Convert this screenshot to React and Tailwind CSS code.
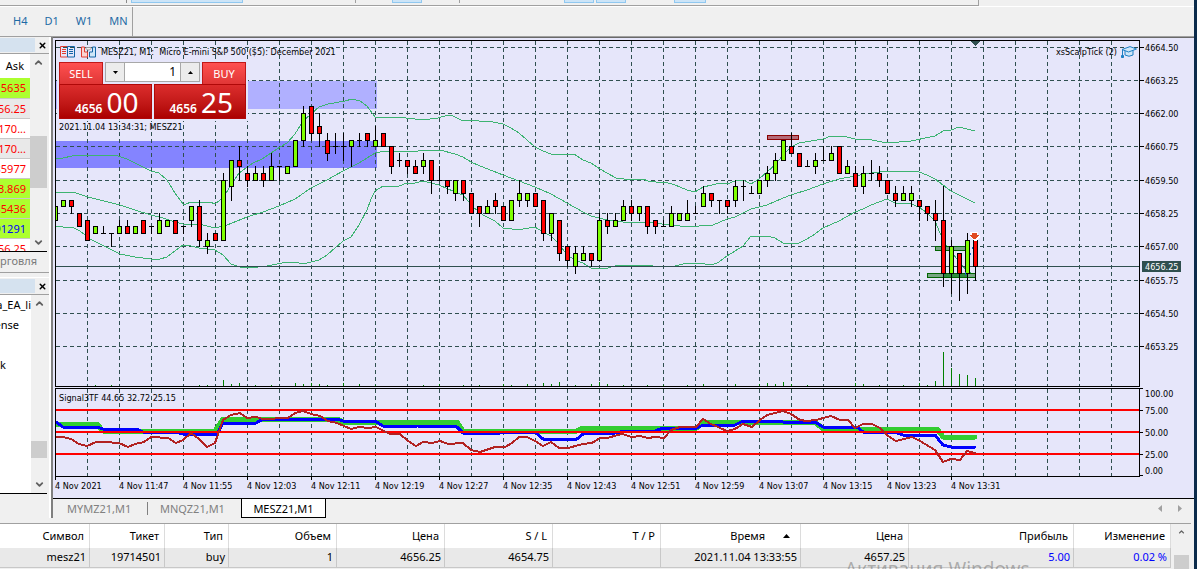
import { ChevronUp, ChevronDown, X } from 'lucide-react'

// [wick top, body top, body bottom, wick bottom, colour] in 0.25 ticks below 4664.50
// g = bullish, r = bearish, d = doji
const CANDLES = [
  [24, 24, 26, 26, 'g'], [23, 23, 24, 24, 'g'], [23, 23, 24, 25, 'r'], [25, 25, 27, 27, 'r'],
  [26, 26, 29, 29, 'r'], [27, 27, 28, 28, 'g'], [27, 28, 28, 28, 'd'], [28, 28, 28, 30, 'd'],
  [26, 27, 28, 28, 'g'], [26, 27, 28, 28, 'r'], [27, 27, 28, 28, 'g'], [26, 26, 28, 28, 'r'],
  [27, 27, 27, 28, 'd'], [25, 26, 28, 28, 'g'], [26, 26, 27, 27, 'g'], [26, 26, 28, 28, 'r'],
  [27, 27, 27, 28, 'd'], [24, 24, 26, 27, 'g'], [23, 24, 29, 30, 'r'], [28, 29, 30, 31, 'g'],
  [28, 28, 29, 29, 'r'], [19, 20, 29, 29, 'g'], [17, 17, 21, 23, 'g'], [15, 17, 18, 20, 'r'],
  [18, 19, 20, 21, 'r'], [18, 19, 20, 20, 'g'], [18, 19, 20, 21, 'r'], [16, 18, 20, 20, 'g'],
  [18, 18, 18, 20, 'd'], [18, 18, 19, 19, 'g'], [14, 14, 18, 18, 'g'], [9, 10, 14, 15, 'g'],
  [9, 9, 13, 14, 'r'], [10, 12, 13, 15, 'r'], [13, 14, 16, 17, 'r'], [13, 15, 15, 16, 'd'],
  [13, 15, 15, 17, 'd'], [14, 14, 15, 18, 'g'], [13, 14, 14, 15, 'd'], [13, 13, 14, 15, 'r'],
  [12, 14, 15, 15, 'g'], [13, 13, 15, 15, 'r'], [15, 15, 18, 19, 'r'], [16, 17, 17, 18, 'd'],
  [17, 17, 18, 19, 'r'], [17, 18, 19, 19, 'r'], [16, 17, 18, 19, 'g'], [17, 17, 20, 22, 'r'],
  [18, 20, 20, 20, 'd'], [20, 20, 21, 22, 'r'], [20, 20, 22, 23, 'g'], [20, 20, 22, 23, 'r'],
  [22, 22, 25, 25, 'r'], [24, 24, 25, 27, 'r'], [23, 24, 25, 25, 'g'], [22, 23, 24, 25, 'r'],
  [24, 24, 26, 26, 'r'], [23, 23, 26, 26, 'g'], [20, 22, 23, 24, 'g'], [22, 22, 23, 24, 'g'],
  [22, 22, 24, 24, 'r'], [23, 23, 28, 29, 'r'], [25, 25, 28, 29, 'g'], [26, 26, 31, 32, 'r'],
  [30, 30, 32, 33, 'r'], [30, 31, 33, 34, 'g'], [30, 31, 32, 32, 'g'], [31, 31, 32, 33, 'r'],
  [25, 26, 32, 32, 'g'], [25, 26, 27, 28, 'r'], [25, 26, 27, 27, 'g'], [23, 24, 26, 26, 'g'],
  [23, 24, 25, 26, 'r'], [24, 24, 25, 26, 'g'], [24, 24, 27, 28, 'r'], [26, 26, 27, 28, 'r'],
  [26, 27, 27, 27, 'd'], [24, 25, 27, 27, 'g'], [25, 25, 26, 26, 'g'], [23, 25, 26, 26, 'g'],
  [24, 25, 25, 25, 'd'], [21, 22, 24, 24, 'g'], [22, 22, 23, 24, 'r'], [23, 23, 23, 25, 'd'],
  [23, 23, 24, 25, 'r'], [20, 21, 23, 24, 'g'], [20, 21, 21, 23, 'd'], [21, 22, 22, 22, 'd'],
  [20, 20, 22, 22, 'g'], [18, 19, 20, 21, 'g'], [16, 17, 19, 20, 'g'], [14, 14, 17, 17, 'g'],
  [13, 15, 16, 16, 'r'], [16, 16, 18, 18, 'r'], [17, 18, 18, 18, 'd'], [16, 17, 18, 19, 'g'],
  [15, 17, 17, 17, 'd'], [15, 16, 17, 17, 'g'], [15, 15, 19, 19, 'r'], [17, 18, 19, 19, 'g'],
  [18, 19, 21, 21, 'r'], [18, 19, 21, 22, 'g'], [17, 19, 19, 20, 'd'], [18, 19, 20, 21, 'r'],
  [20, 20, 22, 22, 'r'], [21, 22, 23, 24, 'r'], [21, 22, 23, 23, 'g'], [21, 22, 23, 24, 'g'],
  [23, 23, 24, 26, 'r'], [24, 24, 25, 26, 'r'], [23, 25, 26, 29, 'r'], [21, 26, 34, 36, 'r'],
  [29, 30, 34, 37, 'g'], [31, 31, 34, 38, 'r'], [28, 29, 34, 37, 'g'], [29, 29, 33, 35, 'r'],
]

// Bollinger bands
const UPPER = '56,158 63,158 72,156 84,155 95,156 104,155 118,156 127,159 135,163 143,167 151,171 159,173 167,180 175,193 183,204 186,204 191,202 210,202 215,204 223,198 231,185 239,173 253,163 262,159 280,147 287,143 295,134 303,121 311,114 319,107 328,104 345,101 352,99 360,101 367,106 375,117 406,118 424,120 430,119 438,118 448,115 453,116 463,121 471,120 479,121 493,122 503,124 511,128 519,133 527,140 535,147 543,151 551,154 574,154 583,160 591,163 600,169 607,173 616,178 624,179 643,179 648,181 656,182 665,182 675,185 687,190 695,192 703,187 712,185 720,183 727,184 735,181 743,180 751,184 759,179 775,165 783,155 791,147 799,143 823,139 831,136 847,137 855,139 872,140 887,143 911,141 935,136 943,131 951,130 959,127 967,129 975,131'
const MIDDLE = '56,192 73,192 88,197 104,201 120,205 135,210 151,215 163,218 175,222 183,224 199,224 215,228 227,225 247,217 263,212 279,206 295,199 311,188 327,180 343,171 359,163 375,153 386,151 418,151 440,150 455,154 463,157 471,162 480,166 493,171 503,175 519,181 535,187 551,194 567,203 583,212 591,216 607,220 623,222 645,222 653,223 670,225 680,226 695,227 703,225 713,225 727,219 735,217 751,209 767,205 783,198 791,195 807,190 823,184 839,179 855,176 871,173 887,171 919,172 927,175 935,179 943,185 951,191 975,203'
const LOWER = '56,226 63,227 72,227 80,231 90,239 104,246 120,254 135,257 151,259 160,259 167,257 175,251 183,245 187,245 199,248 215,250 223,255 231,264 240,267 258,267 267,266 287,262 295,262 303,264 311,262 319,260 327,255 343,241 351,237 359,225 367,210 371,199 375,191 383,186 391,187 399,186 407,183 415,183 423,181 431,183 439,185 455,192 463,195 473,207 483,215 495,221 503,228 512,229 523,229 535,227 543,232 551,236 559,244 567,255 575,260 583,263 591,268 608,268 618,265 643,265 653,266 675,266 687,263 698,263 712,265 719,262 727,256 735,251 743,246 751,236 767,236 775,238 783,243 799,243 807,239 815,234 823,228 839,221 855,212 863,209 871,205 879,202 887,199 895,203 911,204 919,207 927,213 935,221 940,233 947,247 951,251 959,262 967,271 975,275'

// Signal3TF lines
const SIG_GREEN = '56,424 97,424 103,431 215,431 223,419 337,419 343,422 457,422 463,431 577,431 583,428 697,428 703,422 815,422 823,429 937,429 943,437 975,437'
const SIG_BLUE = '56,422 63,427 97,427 103,429 137,429 143,432 175,432 183,434 217,434 223,423 256,423 263,419 337,419 343,421 375,421 383,426 417,426 457,427 463,433 500,433 503,432 535,432 543,439 577,439 583,434 615,433 625,431 655,431 663,428 697,428 703,425 735,425 743,421 777,421 783,422 815,422 823,427 857,427 863,432 895,432 903,435 935,435 943,445 951,447 975,447'
const SIG_BROWN = '56,437 63,437 71,439 79,444 87,446 96,442 104,442 119,443 128,447 135,444 144,442 151,437 168,438 176,443 183,440 191,433 199,439 207,447 215,443 223,420 231,415 240,413 247,418 256,417 263,419 288,418 295,413 303,411 311,414 320,416 328,421 337,423 351,429 359,427 368,428 376,427 390,434 400,434 408,441 416,446 423,442 432,443 440,441 448,444 463,443 471,450 480,452 495,447 505,447 512,443 519,437 527,437 535,441 543,446 551,442 559,448 568,448 583,444 592,443 600,438 607,438 622,434 632,437 640,436 648,438 655,437 664,438 671,430 680,427 696,427 703,419 711,424 727,431 735,429 743,424 752,427 760,420 767,415 783,411 791,414 800,420 807,421 816,420 831,416 840,420 848,420 855,428 863,424 872,424 880,428 888,436 896,441 912,437 920,441 935,450 943,462 951,459 960,460 967,451 975,453'

// bar index -> volume height
const VOLUMES = {
  5: 1, 7: 1, 18: 1, 19: 1, 21: 6, 22: 2, 23: 3, 25: 1, 27: 1, 30: 3, 31: 2, 32: 3, 33: 2, 34: 1, 36: 3, 38: 2,
  40: 1, 46: 1, 48: 2, 51: 1, 53: 1, 56: 2, 57: 1, 59: 2, 61: 3, 62: 2, 63: 4, 65: 1, 67: 2, 68: 4, 69: 2, 71: 1,
  74: 1, 76: 1, 79: 1, 81: 2, 85: 2, 88: 2, 89: 3, 90: 2, 91: 4, 92: 2, 94: 1, 100: 3, 101: 2, 103: 1, 106: 1,
  108: 3, 109: 1, 110: 5, 111: 34, 112: 18, 113: 12, 114: 11, 115: 8,
}

const PRICES = ['4664.50', '4663.25', '4662.00', '4660.75', '4659.50', '4658.25', '4657.00', '4655.75', '4654.50', '4653.25']
const TIMES = ['4 Nov 2021', '4 Nov 11:47', '4 Nov 11:55', '4 Nov 12:03', '4 Nov 12:11', '4 Nov 12:19', '4 Nov 12:27', '4 Nov 12:35', '4 Nov 12:43', '4 Nov 12:51', '4 Nov 12:59', '4 Nov 13:07', '4 Nov 13:15', '4 Nov 13:23', '4 Nov 13:31']
const LEVELS = [['100.00', 388, 393], ['75.00', 410, 410], ['50.00', 432, 432], ['25.00', 454, 454], ['0.00', 475, 470]]
const GRID_X = Array.from({ length: 33 }, (_, i) => 87 + i * 32)

const barX = (i) => 55 + i * 8
const tickY = (k) => Math.floor(47 + k * 6.66)
const fills = { g: '#7fff00', r: '#ff0000' }

const chartFont = "font-['DejaVu_Sans_Condensed','Noto_Sans',sans-serif]"

function Chart() {
  return (
    <svg viewBox="53 38 1141 460" className={`block w-full h-full text-[9px] ${chartFont}`} shapeRendering="crispEdges">
      <rect x="56" y="81" width="321" height="28" fill="#b0b0ff" />
      <rect x="56" y="141" width="321" height="27" fill="#8484ff" />

      {/* grid */}
      <g stroke="#2f4f4f" strokeDasharray="4 3">
        {GRID_X.map((x) => <path key={x} d={`M${x}.5 41V386M${x}.5 389V476`} />)}
        {PRICES.map((p, i) => <path key={p} d={`M56 ${tickY(i * 5)}.5H1139`} />)}
      </g>

      {/* bands */}
      <g fill="none" stroke="#3cb371">
        <polyline points={UPPER} />
        <polyline points={MIDDLE} />
        <polyline points={LOWER} />
      </g>

      {Object.entries(VOLUMES).map(([i, h]) => (
        <rect key={i} x={barX(+i)} y={386 - h} width="1" height={h} fill="#008000" />
      ))}

      <path d="M56 266.5H1139" stroke="#2f4f4f" />

      {/* order zones */}
      <rect x="767.5" y="135.5" width="31" height="4" fill="#b46a78" stroke="#8b0000" />
      <rect x="935.5" y="246.5" width="31" height="4" fill="#78a583" stroke="#006400" />
      <rect x="927.5" y="273.5" width="48" height="4" fill="#78a583" stroke="#006400" />
      <rect x="943" y="274" width="24" height="3" fill="#2e8b3e" />

      {/* candles */}
      {CANDLES.map(([hi, top, bottom, lo, kind], i) => {
        const x = barX(i)
        const y = tickY(top)
        return (
          <g key={i}>
            <rect x={x} y={tickY(hi)} width="1" height={tickY(lo) - tickY(hi) + 1} />
            {kind === 'd'
              ? <rect x={x - 2} y={y} width="5" height="1" />
              : <rect x={x - 1.5} y={y + 0.5} width="4" height={tickY(bottom) - y} fill={fills[kind]} stroke="#000" />}
          </g>
        )
      })}

      <path d="M970 232h8v3h2v2l-4 4h-2l-4 -4v-2h0z" fill="#fff" />
      <path d="M972 233h5v2h2v1l-4 3h-1l-4 -3v-1h2z" fill="#e04a20" />
      <path d="M972 247v2M970 253v2M965 272v3" stroke="#1565c0" />
      <path d="M970 41h10l-5 5z" fill="#2f4f4f" />

      {/* signal window */}
      <g fill="none" strokeLinejoin="round" strokeLinecap="round">
        <polyline points={SIG_GREEN} stroke="#32cd32" strokeWidth="5" />
        <polyline points={SIG_BLUE} stroke="#0000ff" strokeWidth="3" />
        <path d="M56 410H1139M56 432H1139M56 454H1139" stroke="#ff0000" strokeWidth="2" strokeLinecap="butt" />
        <polyline points={SIG_BROWN} stroke="#b22222" strokeWidth="2" />
      </g>

      {/* frames */}
      <rect x="52" y="38" width="3" height="460" fill="#e6e6fa" />
      <path d="M1139.500 386.500H55.500V40.500H1139.500V386.500M1139.500 476.500H55.500V388.500H1139.500V476.500" fill="none" stroke="#000" />

      {/* price axis */}
      {PRICES.map((p, i) => (
        <g key={p}>
          <path d={`M1139 ${tickY(i * 5)}.5H1144`} stroke="#000" />
          <text x="1145" y={tickY(i * 5) + 4}>{p}</text>
        </g>
      ))}
      <rect x="1142" y="261" width="39" height="11" fill="#2f4f4f" />
      <text x="1145" y="270" fill="#fff">4656.25</text>
      {LEVELS.map(([label, tick, y]) => (
        <g key={label}>
          <path d={`M1139 ${tick}.5H1143`} stroke="#000" />
          <text x="1145" y={y + 4}>{label}</text>
        </g>
      ))}

      {/* time axis */}
      {TIMES.map((t, i) => (
        <g key={t}>
          <path d={`M${55 + i * 64}.5 477V480`} stroke="#000" />
          <text x={55 + i * 64} y="489">{t}</text>
        </g>
      ))}
    </svg>
  )
}

function BookIcon() {
  return (
    <svg width="15" height="12" viewBox="0 0 15 12" fill="none" strokeWidth="1">
      <path d="M7.500 .5H.5v10.500h7M2 3.500h4M2 5.500h4M2 7.500h4" stroke="#e03c31" />
      <path d="M14.500 .5h-7v10.500h7zM9 3.500h4M9 5.500h4M9 7.500h4" stroke="#1464a5" />
    </svg>
  )
}

function PanelsIcon() {
  return (
    <svg width="15" height="12" viewBox="0 0 15 12" fill="none">
      <path d="M.5 1h3v5h3v5h-6z" fill="#fbd5d2" stroke="#e03c31" />
      <path d="M14.500 1h-3v5h-3v5h6z" fill="#cfe6f8" stroke="#1464a5" />
      <path d="M5 1.500h5v1l-1.500 1.500h-2l-1.500 -1.500z" fill="#eee" stroke="#999" />
    </svg>
  )
}

function CapIcon() {
  return (
    <svg width="16" height="12" viewBox="0 0 16 12" fill="#cfe6f8" stroke="#1d7fc4" strokeLinejoin="round">
      <path d="M4 4v5q4 2.500 8 0V4" />
      <path d="M1 3.500L9 .6l6.500 2.400L7.500 6z" />
      <path d="M1.500 4v6" fill="none" />
      <path d="M.5 9.500h2v2h-2z" fill="#1d7fc4" />
    </svg>
  )
}

function OneClick() {
  return (
    <div className="absolute left-[4px] top-[22px] w-[191px] p-[2px] bg-[#e6e6fa] font-['Noto_Sans',sans-serif] text-white">
      <div className="flex h-[22px]">
        <button className="w-[44px] bg-linear-to-b from-[#ff5050] to-[#e03636] border border-b-0 border-[#c01818] text-[11px] leading-[20px]">SELL</button>
        <div className="flex flex-1 mx-[2px] h-[20px] border border-[#a8a8a8] bg-white text-black">
          <button aria-label="Less" className="w-[19px] bg-[#ececec] border-r border-[#a8a8a8] flex items-center justify-center">
            <svg width="5" height="3"><path d="M0 0h5L2.500 3z" /></svg>
          </button>
          <input aria-label="Volume" defaultValue="1" className="w-0 flex-1 pr-1 text-right text-[12px] outline-none" />
          <button aria-label="More" className="w-[19px] bg-[#ececec] border-l border-[#a8a8a8] flex items-center justify-center">
            <svg width="5" height="3"><path d="M0 3h5L2.500 0z" /></svg>
          </button>
        </div>
        <button className="w-[44px] bg-linear-to-b from-[#ff5050] to-[#e03636] border border-b-0 border-[#c01818] text-[11px] leading-[20px]">BUY</button>
      </div>
      <div className="flex gap-[2px]">
        {['00', '25'].map((pips) => (
          <button key={pips} className="flex-1 h-[35px] bg-linear-to-b from-[#dc2c2c] to-[#ac0000] border border-[#b00808] flex items-end justify-end gap-[4px] pr-[12px]">
            <span className="text-[12px] leading-[18px] font-semibold">4656</span>
            <span className="text-[28px] leading-[32px]">{pips}</span>
          </button>
        ))}
      </div>
    </div>
  )
}

const ASKS = [
  ['5635', 'bg-[#adff2f] text-[#ff0000]'],
  ['56.25', 'bg-[#e9e9e9] text-[#ff0000]'],
  ['170...', 'bg-white text-[#ff0000]'],
  ['170...', 'bg-[#e9e9e9] text-[#ff0000]'],
  ['85977', 'bg-white text-[#ff0000]'],
  ['3.869', 'bg-[#adff2f] text-[#ff0000]'],
  ['85436', 'bg-[#adff2f] text-[#ff0000]'],
  ['91291', 'bg-[#adff2f] text-[#0000ff]'],
  ['56.25', 'bg-white text-[#ff0000]'],
]

function PanelHeader() {
  return (
    <div className="flex h-[17px] shrink-0 items-center border-b border-[#a0a0a0]">
      <div className="h-[14px] flex-1 bg-[#d5e2ef]" />
      <button aria-label="Close" className="w-[14px] flex justify-center"><X size={9} strokeWidth={4} /></button>
    </div>
  )
}

function Sidebar() {
  return (
    <aside className="flex w-[51px] shrink-0 flex-col border-r-2 border-white bg-[#f0f0f0] text-[11px]">
      <div className="flex h-[236px] shrink-0 flex-col border-b border-[#a0a0a0]">
        <PanelHeader />
        <div className="flex h-[198px] shrink-0 overflow-hidden border-b border-black mr-[2px]">
          <table className="h-fit w-[30px] shrink-0 table-fixed border-collapse text-right">
            <thead>
              <tr className="h-[24px] bg-white"><th className="p-0 pr-[6px] font-normal">Ask</th></tr>
            </thead>
            <tbody>
              {ASKS.map(([ask, tone], i) => (
                <tr key={i} className={`h-[20px] ${tone}`}>
                  <td className="p-0 border-b border-[#c8c8c8]">
                    <div className="flex justify-end overflow-hidden pr-[4px] leading-[19px]">{ask}</div>
                  </td>
                </tr>
              ))}
            </tbody>
          </table>
          <div className="flex flex-1 flex-col items-center py-[3px]">
            <ChevronUp size={11} strokeWidth={4} color="#606060" />
            <div className="h-[52px] w-full mt-[68px] bg-[#cdcdcd]" />
            <ChevronDown size={11} strokeWidth={4} color="#606060" className="mt-auto" />
          </div>
        </div>
        <div className="flex justify-end overflow-hidden pr-[12px] leading-[18px] text-[#7a7a7a]">Торговля</div>
      </div>
      <div className="mt-[4px] flex flex-1 flex-col border-t border-white">
        <PanelHeader />
        <div className="mr-[2px] flex flex-1 border-b border-black">
          <ul className="w-[31px] overflow-hidden bg-white leading-[20px]">
            <li className="flex justify-end">a_EA_li</li>
            <li className="flex justify-end pr-[12px]">ense</li>
            <li className="h-[20px]" />
            <li>k</li>
          </ul>
          <div className="flex flex-1 flex-col items-center py-[3px]">
            <ChevronUp size={11} strokeWidth={4} color="#606060" />
            <div className="mt-auto h-[17px] w-full bg-[#cdcdcd]" />
            <ChevronDown size={11} strokeWidth={4} color="#606060" className="mt-[21px]" />
          </div>
        </div>
        <div className="h-[24px] shrink-0" />
      </div>
    </aside>
  )
}

const COLUMNS = [
  ['Символ', 'mesz21', 'w-[90px]'],
  ['Тикет', '19714501', 'w-[75px]'],
  ['Тип', 'buy', 'w-[64px]'],
  ['Объем', '1', 'w-[108px]'],
  ['Цена', '4656.25', 'w-[108px]'],
  ['S / L', '4654.75', 'w-[108px]'],
  ['T / P', '', 'w-[108px]'],
  ['Время', '2021.11.04 13:33:55', 'w-[140px]'],
  ['Цена', '4657.25', 'w-[108px]'],
  ['Прибыль', '5.00', ''],
  ['Изменение', '0.02 %', 'w-[97px]'],
]

function Positions() {
  return (
    <div className="relative mt-[5px] flex h-[46px] shrink-0 overflow-hidden border-t border-[#a0a0a0] mr-[3px]">
      <table className="h-fit w-0 flex-1 table-fixed border-separate border-spacing-0 text-right text-[11px]">
        <thead>
          <tr className="h-[24px] bg-white">
            {COLUMNS.map(([name, , width], i) => (
              <th key={i} className={`p-0 pr-[5px] font-normal border-r border-[#dcdcdc] ${width}`}>
                {name === 'Время'
                  ? <span className="inline-flex items-center gap-[18px] pr-[5px]">{name}<svg width="7" height="4"><path d="M0 4h7L3.500 0z" /></svg></span>
                  : name}
              </th>
            ))}
          </tr>
        </thead>
        <tbody>
          <tr className="h-[20px] bg-[#e9e9e9]">
            {COLUMNS.map(([, value], i) => (
              <td key={i} className={i > 8 ? 'p-0 pr-[3px] border-r border-b border-[#c8c8c8] text-[#0000ff]' : 'p-0 pr-[3px] border-r border-b border-[#c8c8c8]'}>{value}</td>
            ))}
          </tr>
        </tbody>
      </table>
      <div className="flex w-[20px] flex-col items-center bg-[#f0f0f0] pt-[4px]">
        <ChevronUp size={11} strokeWidth={4} color="#606060" />
        <div className="mt-[19px] h-[20px] w-[15px] bg-[#cdcdcd]" />
      </div>
      <p className="pointer-events-none absolute left-[845px] top-[31px] whitespace-nowrap text-[19px] leading-[28px] text-[#7878788c]">Активация Windows</p>
    </div>
  )
}

export default function App() {
  return (
    <div className="flex h-screen flex-col overflow-hidden border-r-3 border-[#0b2b4b] bg-[#f0f0f0] font-['Noto_Sans',sans-serif] text-black">
      {/* toolbars */}
      <div className="flex h-[6px] w-[979px] shrink-0 items-start border-r border-b border-[#a0a0a0]">
        <div className="h-[3px] w-[127px] border-r border-[#8a8a8a]" />
        <div className="ml-[4px] h-[3px] w-[112px] border border-t-0 border-[#90c8f0] bg-[#cce4f7]" />
        <div className="ml-[112px] h-[3px] w-px bg-[#a0a0a0]" />
        <div className="ml-[36px] h-[3px] w-[30px] border border-t-0 border-[#90c8f0] bg-[#cce4f7]" />
        <div className="ml-[37px] h-[3px] w-px bg-[#a0a0a0]" />
        <div className="ml-[104px] h-[3px] w-[30px] border border-t-0 border-[#90c8f0] bg-[#cce4f7]" />
        <div className="ml-[2px] h-[3px] w-[30px] border border-t-0 border-[#90c8f0] bg-[#cce4f7]" />
        <div className="ml-[48px] h-[3px] w-[32px] border border-t-0 border-[#90c8f0] bg-[#cce4f7]" />
      </div>
      <div className="h-px shrink-0 bg-white" />
      <div className="flex h-[29px] w-[133px] shrink-0 items-center gap-[17px] border-r border-[#a0a0a0] pl-[13px] text-[11px] text-[#1e6aa5]">
        <button>H4</button>
        <button>D1</button>
        <button>W1</button>
        <button>MN</button>
      </div>

      <div className="flex min-h-0 flex-1 border-t border-[#a0a0a0]">
        <Sidebar />
        <main className="flex min-w-0 flex-1 flex-col border-l-2 border-[#808080]">
          <div className="relative min-h-0 flex-1 border-t border-[#696969] bg-[#e6e6fa]">
            <Chart />
            <div className={`absolute inset-x-[7px] top-[7px] flex items-center text-[9px] leading-[14px] ${chartFont}`}>
              <BookIcon />
              <span className="ml-[6px]"><PanelsIcon /></span>
              <span className="ml-[5px] whitespace-pre">MESZ21, M1:  Micro E-mini S&P 500 ($5): December 2021</span>
              <span className="ml-auto mr-[4px]">xsScalpTick (2)</span>
              <span className="mr-[50px]"><CapIcon /></span>
            </div>
            <OneClick />
            <p className={`absolute left-[6px] top-[83px] text-[9px] leading-[12px] ${chartFont}`}>2021.11.04 13:34:31; MESZ21</p>
            <p className={`absolute left-[6px] top-[354px] text-[9px] leading-[12px] ${chartFont}`}>Signal3TF 44.65 32.72 25.15</p>
          </div>
          <div className="flex h-[20px] shrink-0 items-start border-t border-black text-[11px] leading-[19px] text-[#808080]">
            <button className="ml-[14px] w-[68px] text-left">MYMZ21,M1</button>
            <span className="mx-[12px] mt-[3px] h-[13px] w-px bg-[#808080]" />
            <button className="w-[69px] text-left">MNQZ21,M1</button>
            <button className="ml-[12px] h-[19px] w-[85px] border border-t-0 border-black bg-white text-black">MESZ21,M1</button>
            <svg width="24" height="8" className="ml-auto mr-[12px] mt-[6px]"><path d="M4 0v7L0 3.500zM20 0v7L24 3.500z" fill="#a0a0a0" /></svg>
          </div>
        </main>
      </div>

      <Positions />
    </div>
  )
}
